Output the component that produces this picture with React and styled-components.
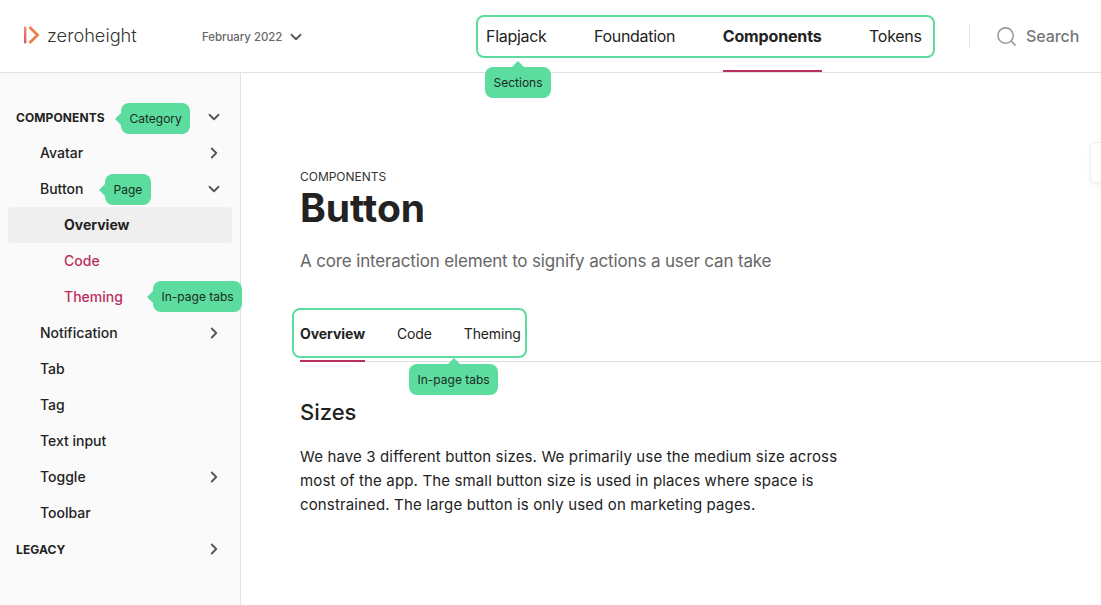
import React from "react"
import styled, { createGlobalStyle } from "styled-components"
import { ChevronDown, ChevronRight, Search as SearchIcon } from "lucide-react"

const GlobalStyle = createGlobalStyle`
	html, body {
		margin: 0;
		padding: 0;
		height: 100%;
		background: #fff;
		overflow: hidden;
	}
	body {
		font-family: Inter, "Liberation Sans", sans-serif;
		color: #222;
	}
`

const Page = styled.div`
	position: relative;
	width: 1101px;
	height: 605px;
	overflow: hidden;
	display: flex;
	flex-direction: column;
`

const Header = styled.header`
	flex: none;
	box-sizing: border-box;
	height: 73px;
	border-bottom: 1px solid #e2e2e2;
	display: flex;
	align-items: center;
	padding-left: 24px;
`

const Logo = styled.div`
	width: 178px;
	margin-bottom: 2px;
	display: flex;
	align-items: center;
	gap: 6px;
	font-size: 18.2px;
	font-weight: 300;
	color: #333;
`

const Version = styled.div`
	width: 284px;
	padding-top: 1px;
	display: flex;
	align-items: center;
	gap: 5px;
	font-size: 11.4px;
	font-weight: 500;
	color: #666;
`

const Nav = styled.nav`
	position: relative;
	height: 72px;
	display: flex;
	gap: 47.5px;
`

const NavItem = styled.a`
	display: flex;
	align-items: center;
	box-sizing: border-box;
	height: 72px;
	padding-top: 2px;
	font-size: 16px;
	letter-spacing: ${({ $active }) => ($active ? "-0.15px" : "-0.3px")};
	font-weight: ${({ $active }) => ($active ? 700 : 400)};
	border-bottom: 2px solid ${({ $active }) => ($active ? "#b9305c" : "transparent")};
	color: #222;
`

const NavOutline = styled.div`
	position: absolute;
	left: -10px;
	right: -13.5px;
	top: 15px;
	height: 43px;
	box-sizing: border-box;
	border: 2px solid #5cdc9e;
	border-radius: 8px;
`

const SearchBox = styled.div`
	margin-left: 47.5px;
	height: 24px;
	padding-left: 25px;
	border-left: 1px solid #e2e2e2;
	display: flex;
	align-items: center;
	gap: 8px;
	font-size: 16px;
	font-weight: 500;
	letter-spacing: -0.1px;
	color: #777;
`

const Body = styled.div`
	flex: 1;
	display: flex;
	min-height: 0;
`

const Sidebar = styled.aside`
	flex: none;
	box-sizing: border-box;
	width: 241px;
	padding: 26px 8px 0;
	background: #fafafa;
	border-right: 1px solid #e2e2e2;
`

const Row = styled.div`
	position: relative;
	box-sizing: border-box;
	height: 36px;
	display: flex;
	align-items: center;
	justify-content: space-between;
	padding-left: ${({ $level }) => 8 + $level * 24}px;
	padding-right: 9px;
	font-size: 14px;
	font-weight: 500;
	color: ${({ $tab }) => ($tab ? "#b9305c" : "#222")};
	border-radius: 4px;

	${({ $selected }) => $selected && `
		background: #efefef;
		font-weight: 700;
	`}
`

const RowLabel = styled.span`
	margin-bottom: 2px;
`

const Category = styled(Row)`
	font-size: 12px;
	font-weight: 700;
	letter-spacing: 0.1px;
	text-transform: uppercase;
`

const Chevron = styled.svg`
	color: #555;
	flex: none;
`

const Main = styled.main`
	flex: 1;
	padding: 97px 0 0 59px;
	min-width: 0;
`

const Crumb = styled.div`
	font-size: 12px;
	line-height: 14px;
	letter-spacing: -0.02px;
	color: #333;
	text-transform: uppercase;
`

const Title = styled.h1`
	margin: 0;
	font-size: 39px;
	line-height: 48px;
	font-weight: 700;
	color: #222;
`

const Lead = styled.p`
	margin: 15px 0 0;
	font-size: 17px;
	line-height: 28px;
	letter-spacing: -0.15px;
	color: #666;
`

const Tabs = styled.div`
	position: relative;
	margin-top: 33px;
	height: 54px;
	box-sizing: border-box;
	border-bottom: 1px solid #ddd;
	display: flex;
	gap: 32px;
`

const TabItem = styled.a`
	height: 54px;
	box-sizing: border-box;
	padding-bottom: 2px;
	display: flex;
	align-items: center;
	font-size: 14px;
	letter-spacing: ${({ $active }) => ($active ? "-0.05px" : "-0.15px")};
	font-weight: ${({ $active }) => ($active ? 700 : 400)};
	border-bottom: 2px solid ${({ $active }) => ($active ? "#b9305c" : "transparent")};
	color: #222;
`

const TabsOutline = styled.div`
	position: absolute;
	left: -8px;
	top: 0;
	width: 235px;
	height: 50px;
	box-sizing: border-box;
	border: 2px solid #5cdc9e;
	border-radius: 8px;
`

const Heading = styled.h2`
	margin: 34px 0 0;
	font-size: 22px;
	line-height: 32px;
	font-weight: 500;
	color: #222;
`

const Copy = styled.p`
	margin: 17px 0 0;
	width: 545px;
	font-size: 15px;
	line-height: 24px;
	letter-spacing: 0.14px;
	color: #222;
`

const Note = styled.div`
	position: absolute;
	left: ${({ $x }) => $x}px;
	top: ${({ $y }) => $y}px;
	box-sizing: border-box;
	height: 31px;
	padding: 0 8.5px;
	display: flex;
	align-items: center;
	white-space: nowrap;
	font-size: 12px;
	font-weight: 400;
	color: #1b2b24;
	background: #5cdc9e;
	border-radius: 8px;

	&::before {
		content: "";
		position: absolute;
		${({ $arrow }) => ($arrow === "top" ? `
			left: 50%;
			top: -6px;
			margin-left: -6px;
			border-left: 6px solid transparent;
			border-right: 6px solid transparent;
			border-bottom: 6px solid #5cdc9e;
		` : `
			left: -6px;
			top: 50%;
			margin-top: -6px;
			border-top: 6px solid transparent;
			border-bottom: 6px solid transparent;
			border-right: 6px solid #5cdc9e;
		`)}
	}
`

const EdgeCard = styled.div`
	position: absolute;
	left: 1090px;
	top: 142px;
	width: 30px;
	height: 41px;
	box-sizing: border-box;
	background: #fff;
	border: 1px solid #eee;
	border-radius: 4px;
	box-shadow: 0 2px 6px rgba(0, 0, 0, 0.05);
`

const LogoMark = () => (
	<svg width="17" height="18" viewBox="0 0 17 18" fill="none">
		<defs>
			<linearGradient id="logoBar" x1="0" y1="0" x2="0" y2="1">
				<stop offset="0" stopColor="#ee9160" />
				<stop offset="1" stopColor="#dd4f6e" />
			</linearGradient>
		</defs>
		<rect x="0" y="0.5" width="2.4" height="17" rx="1" fill="url(#logoBar)" />
		<path d="M5.5 1 L13.5 9 L5.5 17" stroke="#e9824c" strokeWidth="2.8" />
	</svg>
)

const upperPages = [
	{ label: "Avatar", icon: "right" },
	{ label: "Button", icon: "down" },
]

const lowerPages = [
	{ label: "Notification", icon: "right" },
	{ label: "Tab" },
	{ label: "Tag" },
	{ label: "Text input" },
	{ label: "Toggle", icon: "right" },
	{ label: "Toolbar" },
]

const SideIcon = ({ icon }) => {
	if (icon === "down") return <Chevron as={ChevronDown} size={18} strokeWidth={2.4} />
	if (icon === "right") return <Chevron as={ChevronRight} size={18} strokeWidth={2.4} />
	return null
}

const PageRow = ({ label, icon }) => (
	<Row $level={1}>
		<RowLabel>{label}</RowLabel>
		<SideIcon icon={icon} />
	</Row>
)

export default function App() {
	return (
		<Page>
			<GlobalStyle />
			<Header>
				<Logo>
					<LogoMark />
					<span>zeroheight</span>
				</Logo>
				<Version>
					<span>February 2022</span>
					<Chevron as={ChevronDown} size={18} strokeWidth={2.4} />
				</Version>
				<Nav>
					<NavItem>Flapjack</NavItem>
					<NavItem>Foundation</NavItem>
					<NavItem $active>Components</NavItem>
					<NavItem>Tokens</NavItem>
					<NavOutline />
				</Nav>
				<SearchBox>
					<SearchIcon size={23} strokeWidth={1.6} color="#999" />
					<span>Search</span>
				</SearchBox>
			</Header>
			<Body>
				<Sidebar>
					<Category $level={0}>
						<span>Components</span>
						<SideIcon icon="down" />
					</Category>
					{upperPages.map((p) => (
						<PageRow key={p.label} {...p} />
					))}
					<Row $level={2} $selected><RowLabel>Overview</RowLabel></Row>
					<Row $level={2} $tab><RowLabel>Code</RowLabel></Row>
					<Row $level={2} $tab><RowLabel>Theming</RowLabel></Row>
					{lowerPages.map((p) => (
						<PageRow key={p.label} {...p} />
					))}
					<Category $level={0}>
						<span>Legacy</span>
						<SideIcon icon="right" />
					</Category>
				</Sidebar>
				<Main>
					<Crumb>Components</Crumb>
					<Title>Button</Title>
					<Lead>A core interaction element to signify actions a user can take</Lead>
					<Tabs>
						<TabItem $active>Overview</TabItem>
						<TabItem>Code</TabItem>
						<TabItem>Theming</TabItem>
						<TabsOutline />
					</Tabs>
					<Heading>Sizes</Heading>
					<Copy>
						We have 3 different button sizes. We primarily use the medium size across most of the
						app. The small button size is used in places where space is constrained. The large
						button is only used on marketing pages.
					</Copy>
				</Main>
			</Body>
			<Note $x={485} $y={67} $arrow="top">Sections</Note>
			<Note $x={121} $y={103} $arrow="left">Category</Note>
			<Note $x={105} $y={174} $arrow="left">Page</Note>
			<Note $x={153} $y={281} $arrow="left">In-page tabs</Note>
			<Note $x={409} $y={364} $arrow="top">In-page tabs</Note>
			<EdgeCard />
		</Page>
	)
}
